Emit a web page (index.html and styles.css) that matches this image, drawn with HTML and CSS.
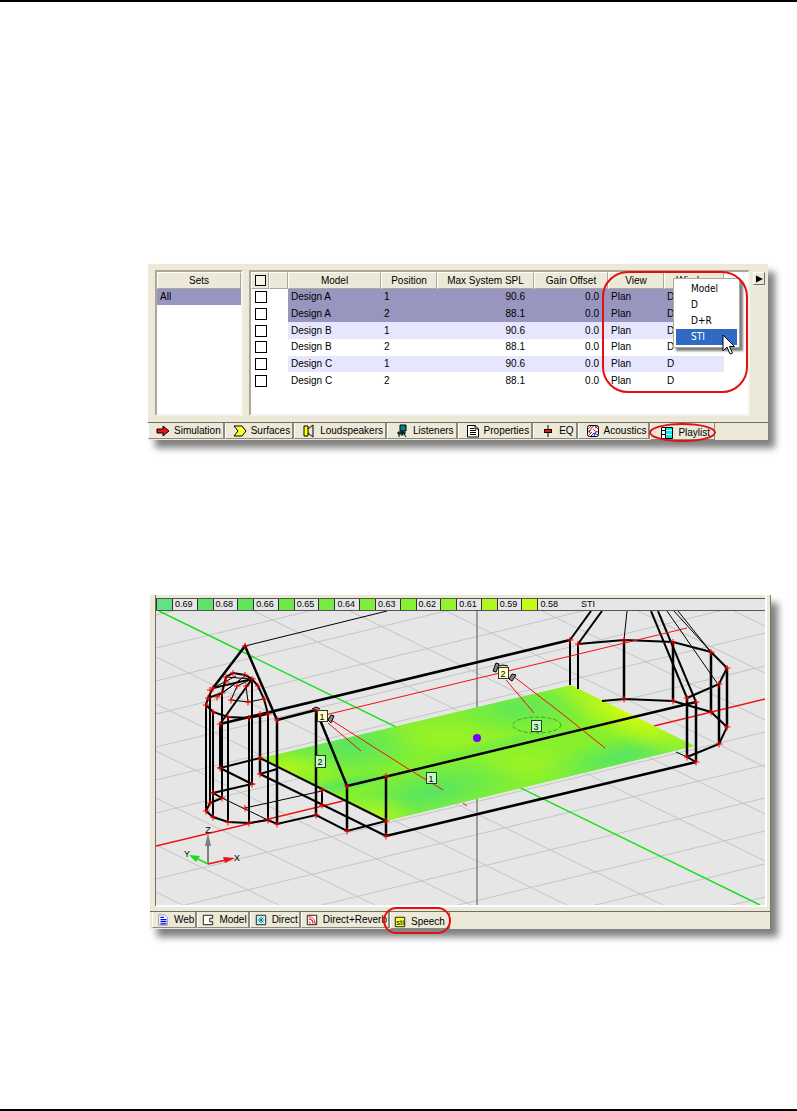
FILE: index.html
```html
<!DOCTYPE html>
<html lang="en">
<head>
    <meta charset="UTF-8">
    <meta name="viewport" content="width=device-width, initial-scale=1.0">
    <title>Playlist</title>
    <link rel="stylesheet" href="styles.css">
</head>
<body>

<main class="page">
    <section class="window playlist">
        <div class="playlist-body">
            <div class="well">
                <table class="grid">
                    <thead><tr><th>Sets</th></tr></thead>
                    <tbody><tr class="selected"><td>All</td></tr></tbody>
                </table>
            </div>

            <div class="well designs">
                <table class="grid design-grid">
                    <colgroup>
                        <col class="c-check"><col class="c-mark"><col class="c-model"><col class="c-position">
                        <col class="c-spl"><col class="c-gain"><col class="c-view"><col class="c-window"><col>
                    </colgroup>
                    <thead>
                        <tr>
                            <th><input type="checkbox" class="check-all" aria-label="All"></th>
                            <th></th>
                            <th>Model</th>
                            <th>Position</th>
                            <th>Max System SPL</th>
                            <th>Gain Offset</th>
                            <th>View</th>
                            <th>Window</th>
                            <td></td>
                        </tr>
                    </thead>
                    <tbody>
                        <tr class="selected"><td><input type="checkbox" aria-label="Design A 1"></td><td></td><td>Design A</td><td>1</td><td class="num">90.6</td><td class="num">0.0</td><td>Plan</td><td>D</td><td></td></tr>
                        <tr class="selected"><td><input type="checkbox" aria-label="Design A 2"></td><td></td><td>Design A</td><td>2</td><td class="num">88.1</td><td class="num">0.0</td><td>Plan</td><td>D</td><td></td></tr>
                        <tr class="odd"><td><input type="checkbox" aria-label="Design B 1"></td><td></td><td>Design B</td><td>1</td><td class="num">90.6</td><td class="num">0.0</td><td>Plan</td><td>D</td><td></td></tr>
                        <tr><td><input type="checkbox" aria-label="Design B 2"></td><td></td><td>Design B</td><td>2</td><td class="num">88.1</td><td class="num">0.0</td><td>Plan</td><td>D</td><td></td></tr>
                        <tr class="odd"><td><input type="checkbox" aria-label="Design C 1"></td><td></td><td>Design C</td><td>1</td><td class="num">90.6</td><td class="num">0.0</td><td>Plan</td><td>D</td><td></td></tr>
                        <tr><td><input type="checkbox" aria-label="Design C 2"></td><td></td><td>Design C</td><td>2</td><td class="num">88.1</td><td class="num">0.0</td><td>Plan</td><td>D</td><td></td></tr>
                    </tbody>
                </table>

                <div class="menu" role="menu">
                    <button role="menuitem">Model</button>
                    <button role="menuitem">D</button>
                    <button role="menuitem">D+R</button>
                    <button role="menuitem" class="active">STI</button>
                </div>
                <div class="callout callout-columns"></div>
                <svg class="cursor" viewBox="0 0 13 21"><path d="M1 1V17L5 13L8 20L10.500 19L7.500 12.500H12.500Z" fill="#fff" stroke="#000"/></svg>
            </div>

            <button class="expand" aria-label="Expand"><svg viewBox="0 0 8 8"><path d="M0 0L8 4L0 8Z"/></svg></button>
        </div>

        <div class="tabs" role="tablist">
            <button class="tab" role="tab">
                <svg viewBox="0 0 14 14"><path d="M1 5H7V2L13 7L7 12V9H1Z" fill="#e11" stroke="#000"/></svg>Simulation
            </button>
            <button class="tab" role="tab">
                <svg viewBox="0 0 14 14"><path d="M1 2H9L13 7L9 12H1L5 7Z" fill="#ff3" stroke="#000"/></svg>Surfaces
            </button>
            <button class="tab" role="tab">
                <svg viewBox="0 0 14 14"><path d="M6 5L11 1V13L6 9" fill="none" stroke="#000"/><path d="M2 2H6V12H2Z" fill="#ff0" stroke="#000"/></svg>Loudspeakers
            </button>
            <button class="tab" role="tab">
                <svg viewBox="0 0 14 14"><path d="M5 1H11V7H5Z" fill="#088" stroke="#000"/><path d="M3 8H10V10H3ZM7 7V10M4 10V13M9 10L11 13M7 10V12" fill="#088" stroke="#000"/></svg>Listeners
            </button>
            <button class="tab" role="tab">
                <svg viewBox="0 0 14 14"><path d="M1.500 1.500H9L12.500 5V13H1.500Z" fill="#fff" stroke="#000"/><path d="M4 4.500H8M4 6.500H10M4 8.500H10M4 10.500H10M9 1V5H12" fill="none" stroke="#000"/></svg>Properties
            </button>
            <button class="tab" role="tab">
                <svg viewBox="0 0 14 14"><path d="M7 1V13" stroke="#777" stroke-width="2"/><path d="M3 5H11V9H3Z"/><path d="M4 6H10V8H4Z" fill="#e11"/></svg>EQ
            </button>
            <button class="tab" role="tab">
                <svg viewBox="0 0 14 14"><rect x="1.500" y="1.500" width="11" height="11" rx="2" fill="#fff" stroke="#000"/><path d="M2 5L5 2M2 8Q6 7 5 4L8 2M3 11L6 8M9 2L12 5M7 5L9 7L12 8" stroke="#d22" fill="none"/><path d="M5 12L8 9L12 11M9 4L12 2M3 6L4 9M8 12L10 8" stroke="#22c" fill="none"/></svg>Acoustics
            </button>
            <button class="tab current" role="tab" aria-selected="true">
                <svg viewBox="0 0 14 14"><path d="M1.500 1.500H12.500V12.500H1.500Z" fill="#fff"/><path d="M6 2H12V12H6Z" fill="#0ee"/><path d="M6 4.500H12M6 8.500H12" stroke="#fff"/><path d="M1.500 1.500H12.500V12.500H1.500ZM5.500 2V12M2 4.500H5M2 8.500H5" fill="none" stroke="#000"/></svg>Playlist
                <span class="callout callout-tab"></span>
            </button>
        </div>
    </section>

    <section class="window speech">
        <div class="viewport">
            <div class="legend">
                <div><i class="s69"></i>0.69</div>
                <div><i class="s68"></i>0.68</div>
                <div><i class="s66"></i>0.66</div>
                <div><i class="s65"></i>0.65</div>
                <div><i class="s64"></i>0.64</div>
                <div><i class="s63"></i>0.63</div>
                <div><i class="s62"></i>0.62</div>
                <div><i class="s61"></i>0.61</div>
                <div><i class="s59"></i>0.59</div>
                <div><i class="s58"></i>0.58</div>
                <div class="unit">STI</div>
            </div>

            <svg class="scene" viewBox="156 611 609 294">
                <defs>
                    <marker id="cross" markerUnits="userSpaceOnUse" markerWidth="7" markerHeight="7" refX="3.500" refY="3.500">
                        <path d="M3.500 0V7M0 3.500H7" stroke="#f00"/>
                    </marker>
                    <clipPath id="floor"><path d="M261 758L571 685L695 746L386 821Z"/></clipPath>
                    <radialGradient id="cool"><stop offset="0" stop-color="#57e562"/><stop offset="1" stop-color="#57e562" stop-opacity="0"/></radialGradient>
                    <radialGradient id="warm"><stop offset="0" stop-color="#d2fb0c"/><stop offset="1" stop-color="#d2fb0c" stop-opacity="0"/></radialGradient>
                </defs>

                <!-- ground grid -->
                <path class="ground" d="M156 615l609 -147M156 648l609 -147M156 681l609 -147M156 714l609 -147M156 747l609 -147M156 780l609 -147M156 813l609 -147M156 879l609 -147M156 912l609 -147M156 945l609 -147M156 978l609 -147M156 1011l609 -147M156 1044l609 -147"/>
                <path class="ground" d="M156 328l609 298M156 375l609 298M156 422l609 298M156 469l609 298M156 516l609 298M156 563l609 298M156 657l609 298M156 704l609 298M156 751l609 298M156 798l609 298M156 845l609 298M156 892l609 298"/>
                <path d="M477 611V905" stroke="#808080" stroke-width="1.500"/>
                <path d="M159 611L760 905" stroke="#18e018" stroke-width="1.500"/>
                <path d="M156 846L343 801M654 726L765 699" stroke="#e81414" stroke-width="1.500"/>

                <!-- STI map on the floor -->
                <g clip-path="url(#floor)">
                    <path d="M261 758L571 685L695 746L386 821Z" fill="#86f02e"/>
                    <ellipse cx="350" cy="745" rx="75" ry="32" fill="url(#cool)"/>
                    <ellipse cx="432" cy="792" rx="95" ry="30" fill="url(#cool)" transform="rotate(-12 432 792)"/>
                    <ellipse cx="520" cy="708" rx="75" ry="26" fill="url(#cool)" opacity=".8"/>
                    <ellipse cx="620" cy="757" rx="85" ry="22" fill="url(#cool)" transform="rotate(-12 620 757)"/>
                    <ellipse cx="345" cy="784" rx="50" ry="9" fill="url(#cool)" transform="rotate(-12 345 784)"/>
                    <ellipse cx="500" cy="745" rx="90" ry="8" fill="url(#cool)" opacity=".5" transform="rotate(-14 500 745)"/>
                    <ellipse cx="628" cy="714" rx="90" ry="28" fill="url(#warm)" transform="rotate(26 628 714)"/>
                    <ellipse cx="290" cy="768" rx="50" ry="16" fill="url(#warm)" opacity=".5"/>
                    <ellipse cx="375" cy="814" rx="45" ry="20" fill="url(#warm)" opacity=".6"/>
                    <ellipse cx="450" cy="737" rx="70" ry="18" fill="url(#warm)" opacity=".3"/>
                    <ellipse cx="525" cy="763" rx="60" ry="20" fill="url(#warm)" opacity=".3"/>
                </g>

                <!-- thin construction lines -->
                <path class="thin" d="M245 646L387 611M231 700L248 702L264 699M248 702L246 686M231 700L237 686L252 679M245 808L322 791M222 798L268 820M627 611L624 640M667 611L717 683M674 611L711 652M678 611L711 652M676 752L687 757M213 688L236 676M217 697L240 680M222 693L245 676M226 677L252 679"/>

                <!-- tower -->
                <path class="wall" d="M213 688L245 646L277 720L316 710M220 724L570 640M277 720V824M316 710V815M260 714V774M316 710L347 786V831M347 786L696 702M386 776V836L696 762"/>
                <path class="edge" d="M206 705V811M210 695V803M213 712V817M222 693V798M220 724V768M228 717V822M252 679V784M249 718V823M268 714V820"/>
                <path class="edge" d="M206 811L213 817L228 822L249 823L268 820L277 824L316 815L347 831L386 821M206 811L210 803L222 798L213 793L252 784L220 768L260 758L386 821M260 774L386 836M260 774L277 769M322 790V805"/>
                <path class="edge" d="M206 705L213 712L228 717L249 718L268 714L264 699L258 686L252 679L245 675L233 673L226 677L222 693L208 698L206 705M208 698L213 688L252 679L220 724"/>

                <!-- apse -->
                <path class="edge" d="M570 685V640L591 611M578 689V644L602 611M578 644L624 640L673 642L711 652L727 668L719 684L687 698M602 701L624 699L673 701L711 712L727 727L719 744L687 757L696 762M651 611L687 698M658 611L696 702"/>
                <path class="wall" d="M624 640V699M673 642V701M711 652V712M727 668V727M719 684V744M687 698V757M696 702V762"/>

                <path class="points" d="M245 646L277 720L316 710L347 786L347 831L386 776L386 821L386 836L322 790L322 805L316 815L277 824L268 820L249 823L228 822L213 817L206 811L210 803L222 798L213 793L252 784L220 768L260 774L260 758L245 808"/>
                <path class="points" d="M206 705L208 698L213 712L228 717L249 718L268 714L264 699L258 686L252 679L245 675L233 673L226 677L213 688L217 697L222 693L226 682L237 686L246 686L231 700L248 702L220 724L260 714L210 690"/>
                <path class="points" d="M570 640L578 644L624 640L673 642L711 652L727 668L719 684L687 698L696 702L624 699L673 701L711 712L727 727L719 744L687 757L696 762"/>

                <!-- loudspeaker aiming -->
                <path d="M325 715L687 628M328 718L350 732L410 770L443 790M463 803L467 806M328 723L361 751M506 680L534 713M513 676L565 716L605 748" fill="none" stroke="#f01010"/>
                <path d="M312 709l4 -2l4 2M328 720l3 -5l3 1l-3 7zM493 671l3 -8l3 1l-3 8zM499 666l4 -1l5 1M509 679l3 -5l4 1l-4 6z" fill="#888" stroke="#000"/>
                <ellipse cx="537" cy="725" rx="24" ry="8" fill="none" stroke="#3aa52a" stroke-dasharray="4 2"/>
                <circle cx="477" cy="738" r="4" fill="#7a00ff"/>

                <g class="tag speaker">
                    <rect x="317.500" y="710.500" width="10" height="11"/><text x="322" y="720">1</text>
                    <rect x="498.500" y="667.500" width="10" height="11"/><text x="503" y="677">2</text>
                </g>
                <g class="tag listener">
                    <rect x="315.500" y="755.500" width="10" height="12"/><text x="320" y="765">2</text>
                    <rect x="426.500" y="772.500" width="10" height="11"/><text x="431" y="782">1</text>
                    <rect x="531.500" y="720.500" width="10" height="11"/><text x="536" y="730">3</text>
                </g>

                <!-- axis gizmo -->
                <path d="M208 864V842" stroke="#808080" stroke-width="2"/>
                <path d="M208 833L205 846H211Z" fill="#808080"/>
                <path d="M208 864L226 860" stroke="#e81414" stroke-width="1.500"/>
                <path d="M235 858L223 857L225 863Z" fill="#e81414"/>
                <path d="M208 864L198 859" stroke="#18e018" stroke-width="1.500"/>
                <path d="M189 855L200 856L196 862Z" fill="#18e018"/>
                <g class="axis"><text x="208" y="833">Z</text><text x="237" y="861">X</text><text x="187" y="857">Y</text></g>
            </svg>
        </div>

        <div class="tabs" role="tablist">
            <button class="tab" role="tab">
                <svg viewBox="0 0 14 14"><path d="M2 1H9L12 4V13H2Z" fill="#fff" stroke="#88a"/><path d="M4 4H8M4 6.500H11M4 9H11M4 11.500H11" stroke="#00f" stroke-width="1.400"/></svg>Web
            </button>
            <button class="tab" role="tab">
                <svg viewBox="0 0 14 14"><path d="M1.500 1.500H12.500V5H9V9H12.500V12.500H1.500Z" fill="#fff" stroke="#000"/></svg>Model
            </button>
            <button class="tab" role="tab">
                <svg viewBox="0 0 14 14"><path d="M1.500 1.500H12.500V12.500H1.500Z" fill="#dff" stroke="#000"/><path d="M7 3V11M3 7H11M4 4L10 10M10 4L4 10" stroke="#077"/></svg>Direct
            </button>
            <button class="tab" role="tab">
                <svg viewBox="0 0 14 14"><path d="M1.500 1.500H12.500V12.500H1.500Z" fill="#fff" stroke="#000"/><path d="M3 3Q10 3 11 12M3 6Q8 6 8 12M3 9Q5 9 5 12M4 4L11 11" fill="none" stroke="#e11"/></svg>Direct+Reverb
            </button>
            <button class="tab current" role="tab" aria-selected="true">
                <svg viewBox="0 0 14 14"><path d="M1.500 1.500H12.500V12.500H1.500Z" fill="#ff3" stroke="#000"/><text x="7" y="10" class="sti">sti</text></svg>Speech
                <span class="callout callout-tab"></span>
            </button>
        </div>
    </section>
</main>

</body>
</html>
```
FILE: styles.css
```css
* {
    box-sizing: border-box;
}
body {
    margin: 0;
    background: #fff;
    color: #000;
    font-family: "Liberation Sans", Arial, sans-serif;
    font-size: 10px;
    line-height: 12px;
}
button {
    font: inherit;
    color: inherit;
    border: none;
    background: none;
    padding: 0;
}
.page {
    min-height: 100vh;
    border-top: 2px solid #000;
    border-bottom: 2px solid #000;
}
.window {
    background: #ece9d8;
    box-shadow: 7px 8px 7px rgba(0, 0, 0, 0.5);
}
.playlist {
    margin: 262px 29px 0 148px;
}
.speech {
    margin: 155px 26px 0 150px;
    border-right: 1px solid #7d7a6b;
}

/* playlist tables */
.playlist-body {
    display: grid;
    grid-template-columns: 88px 1fr 12px;
    column-gap: 6px;
    padding: 6px 3px 6px 7px;
}
.well {
    position: relative;
    min-height: 146px;
    background: #fff;
    border: 2px solid #aca899;
    border-right-color: #f6f4ea;
    border-bottom-color: #f6f4ea;
}
.designs {
    margin-right: -3px;
}
.grid {
    width: 100%;
    border-collapse: separate;
    border-spacing: 0;
    table-layout: fixed;
}
.design-grid {
    height: 117px;
}
.grid th,
.grid td {
    height: 16px;
    padding: 0 3px;
    text-align: left;
    white-space: nowrap;
}
.grid th {
    height: 17px;
    padding: 0;
    text-align: center;
    font-weight: normal;
    background: #ece9d8;
    border: 1px solid #aca899;
    border-top-color: #fff;
    border-left-color: #fff;
}
.grid .num {
    padding-right: 9px;
    text-align: right;
}
.c-check { width: 18px; }
.c-mark { width: 19px; }
.c-model { width: 93px; }
.c-position { width: 56px; }
.c-spl { width: 97px; }
.c-gain { width: 74px; }
.c-view { width: 56px; }
.c-window { width: 60px; }
.selected td {
    background: #9895be;
}
.odd td {
    background: #e6e6ff;
}
.design-grid tbody td:nth-child(-n+2),
.design-grid tbody td:last-child {
    background: #fff;
}
.grid input {
    display: block;
    appearance: none;
    width: 12px;
    height: 12px;
    margin: 0 1px;
    background: #fff;
    border: 1px solid #000;
}
.grid .check-all {
    width: 11px;
    height: 11px;
    margin: 0 auto;
    background: #f4f3ea;
}
.expand {
    width: 12px;
    height: 13px;
    margin-top: 2px;
    border: 1px solid #fff;
    border-right-color: #716f64;
    border-bottom-color: #716f64;
}
.expand svg {
    display: block;
    width: 7px;
    height: 8px;
    margin: auto;
}

/* popup menu */
.menu {
    position: absolute;
    top: 6px;
    right: 8px;
    width: 67px;
    padding: 2px;
    background: #fff;
    border: 1px solid #aca899;
    box-shadow: 3px 3px 2px rgba(0, 0, 0, 0.5);
    font-family: "DejaVu Sans Condensed", "DejaVu Sans", sans-serif;
}
.menu button {
    display: block;
    width: 100%;
    height: 16px;
    padding-left: 15px;
    text-align: left;
}
.menu .active {
    background: #316ac5;
    color: #fff;
}
.cursor {
    position: absolute;
    top: 62px;
    right: 13px;
    width: 13px;
    height: 21px;
}

/* red rings */
.callout {
    position: absolute;
    border: 2px solid #e60f0f;
    pointer-events: none;
}
.callout-columns {
    top: -1px;
    right: 0;
    width: 146px;
    height: 122px;
    border-radius: 26px;
}
.callout-tab {
    inset: 0 -2px -3px -2px;
    border-radius: 50%;
}

/* tabs */
.tabs {
    display: flex;
    border-top: 1px solid #716f64;
    height: 18px;
}
.tab {
    position: relative;
    display: flex;
    align-items: center;
    height: 16px;
    padding: 1px 2px 0 7px;
    border-left: 1px solid #fff;
    border-right: 2px solid #8d8a7b;
    border-bottom: 1px solid #8d8a7b;
    white-space: nowrap;
}
.tab svg {
    width: 14px;
    height: 14px;
    margin-right: 4px;
}
.tab.current {
    height: 17px;
    padding: 3px 4px 0 9px;
    border-right-width: 1px;
}
.speech .tabs {
    padding-left: 2px;
}
.speech .tab {
    padding: 0 1px 0 4px;
}
.speech .tab svg {
    width: 12px;
    height: 12px;
    margin-right: 5px;
}
.speech .tab.current {
    padding: 3px 4px 0 3px;
}
.speech .callout-tab {
    inset: -5px -2px -6px -8px;
    border-radius: 26px;
}
.sti {
    font-size: 9px;
    text-anchor: middle;
}

/* 3D view */
.viewport {
    margin: 0 3px 4px 5px;
    padding-top: 3px;
    border: 1px solid #716f64;
    border-top: none;
    border-right: 2px solid #fff;
    border-bottom: 2px solid #fff;
}
.legend {
    display: grid;
    grid-template-columns: repeat(15, 1fr);
    height: 13px;
    background: #e6e6e6;
    border-top: 1px solid #555;
    border-bottom: 1px solid #555;
    font-size: 9px;
    line-height: 11px;
}
.legend div {
    display: flex;
    gap: 2px;
}
.legend i {
    width: 17px;
    border-left: 1px solid #333;
    border-right: 1px solid #333;
}
.legend .unit {
    grid-column: span 5;
    padding-left: 19px;
}
.s69 { background: #62e383; }
.s68 { background: #5fe46a; }
.s66 { background: #60e757; }
.s65 { background: #6bea4a; }
.s64 { background: #74ec42; }
.s63 { background: #7eee3a; }
.s62 { background: #88f034; }
.s61 { background: #93f32c; }
.s59 { background: #aef722; }
.s58 { background: #c5fa16; }
.scene {
    display: block;
    width: 100%;
    background: #e6e6e6;
}
.ground {
    fill: none;
    stroke: #c4c4c4;
}
.thin {
    fill: none;
    stroke: #000;
}
.edge {
    fill: none;
    stroke: #000;
    stroke-width: 2;
}
.wall {
    fill: none;
    stroke: #000;
    stroke-width: 2.500;
}
.points {
    fill: none;
    stroke: none;
    marker: url(#cross);
}
.tag {
    stroke: #333;
    font-size: 9px;
    text-anchor: middle;
}
.tag text,
.axis text {
    stroke: none;
    fill: #000;
}
.speaker {
    fill: #ffffc4;
}
.listener {
    fill: #c0ffc0;
}
.axis {
    font-size: 9px;
    text-anchor: middle;
}
```
